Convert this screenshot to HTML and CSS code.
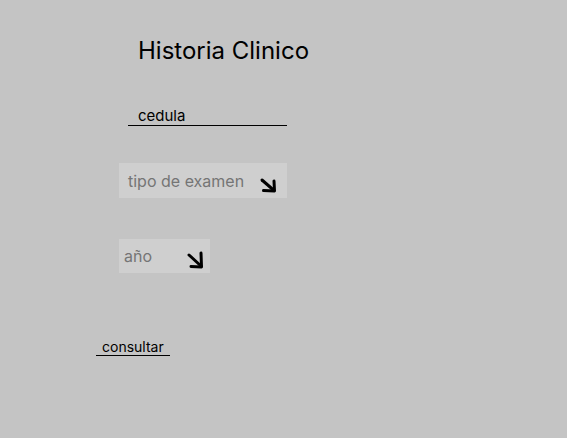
FILE: index.html
```html
<!DOCTYPE html>
<html lang="es">
<head>
<meta charset="utf-8">
<title>Historia Clinico</title>
<link rel="stylesheet" href="styles.css">
</head>
<body>
<main class="page">
  <h1 class="title">Historia Clinico</h1>
  <div class="line-field"><span class="line-label">cedula</span></div>
  <div class="select select-wide">
    <span class="placeholder">tipo de examen</span>
    <svg class="arrow" width="18" height="16" viewBox="0 0 18 16" aria-hidden="true">
      <path d="M3 3 L14.5 13" fill="none" stroke="#000" stroke-width="3" stroke-linecap="round"/>
      <path d="M4.5 13.5 L15.5 14 L15 4" fill="none" stroke="#000" stroke-width="3" stroke-linecap="round" stroke-linejoin="round"/>
    </svg>
  </div>
  <div class="select select-narrow">
    <span class="placeholder placeholder-narrow">año</span>
    <svg class="arrow arrow-narrow" width="18" height="19" viewBox="0 0 18 19" aria-hidden="true">
      <path d="M3 5 L15 16" fill="none" stroke="#000" stroke-width="3" stroke-linecap="round"/>
      <path d="M5 16.5 L15.5 17 L15 3" fill="none" stroke="#000" stroke-width="3" stroke-linecap="round" stroke-linejoin="round"/>
    </svg>
  </div>
  <div class="button-link"><span class="button-label">consultar</span></div>
</main>
</body>
</html>
```
FILE: styles.css
```css
html, body {
  margin: 0;
  padding: 0;
  background: #c4c4c4;
}
body {
  font-family: Inter, "Noto Sans", sans-serif;
  color: #000;
  width: 567px;
  height: 438px;
  overflow: hidden;
}
.page {
  display: flex;
  flex-direction: column;
  align-items: flex-start;
  padding-top: 39px;
}
.title {
  margin: 0 0 0 138px;
  font-size: 24px;
  font-weight: 400;
  line-height: 24px;
}
.line-field {
  margin: 44px 0 0 128px;
  width: 159px;
  border-bottom: 1px solid #000;
  box-sizing: border-box;
  padding-left: 10px;
}
.line-label {
  font-size: 15px;
  line-height: 18px;
  display: block;
}
.select {
  display: flex;
  align-items: flex-end;
  background: #cfcfcf;
  box-sizing: border-box;
}
.select-wide {
  margin: 37px 0 0 119px;
  width: 168px;
  height: 35px;
}
.select-narrow {
  margin: 41px 0 0 119px;
  width: 91px;
  height: 34px;
}
.placeholder {
  align-self: center;
  font-size: 16px;
  line-height: 20px;
  color: #757575;
  padding-left: 9px;
}
.placeholder-narrow {
  padding-left: 5px;
}
.arrow {
  margin-left: auto;
  margin-right: 10px;
  margin-bottom: 5px;
}
.arrow-narrow {
  margin-right: 6px;
  margin-bottom: 4px;
}
.button-link {
  margin: 66px 0 0 96px;
  width: 74px;
  border-bottom: 1px solid #000;
  box-sizing: border-box;
  padding-left: 6px;
}
.button-label {
  display: block;
  font-size: 14px;
  line-height: 16px;
}
```
